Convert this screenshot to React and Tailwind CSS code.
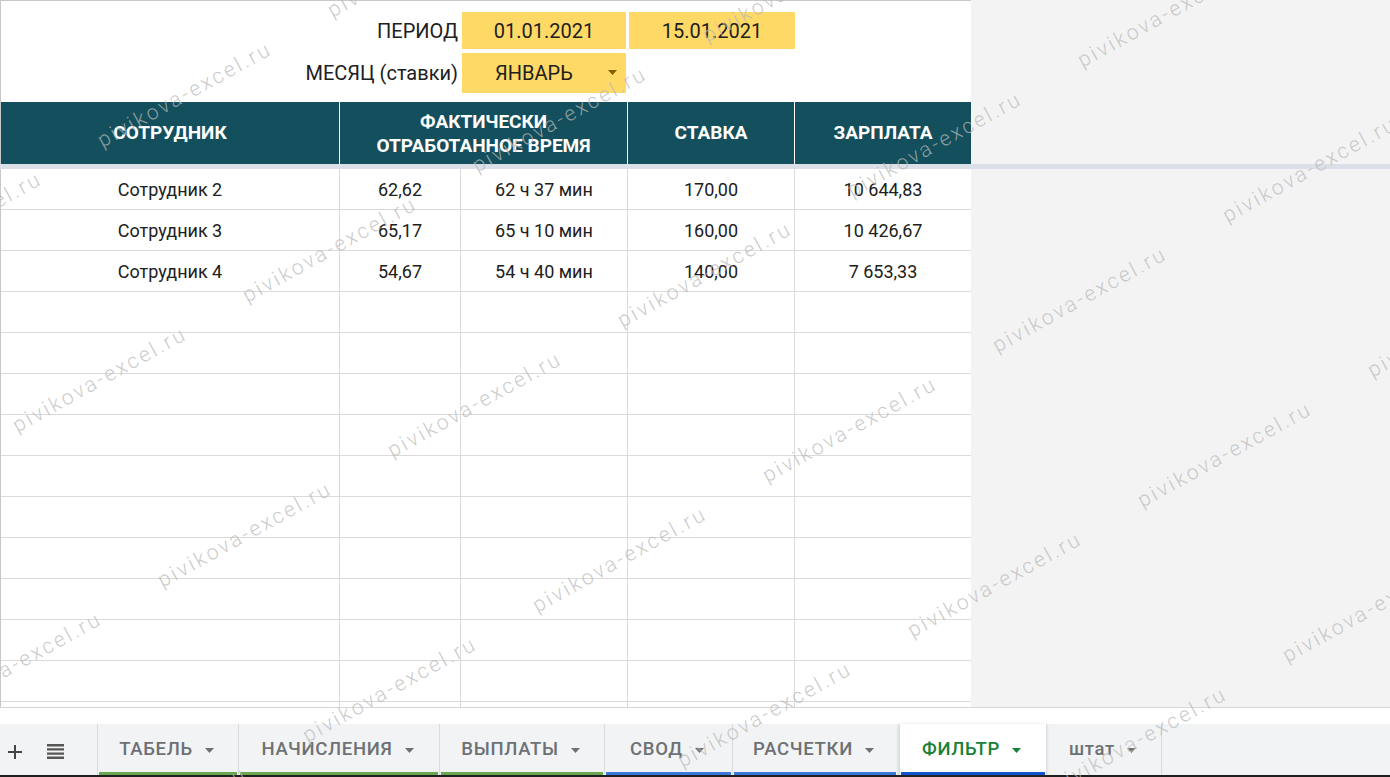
import React from 'react'

const rows = [
  ['Сотрудник 2', '62,62', '62 ч 37 мин', '170,00', '10 644,83'],
  ['Сотрудник 3', '65,17', '65 ч 10 мин', '160,00', '10 426,67'],
  ['Сотрудник 4', '54,67', '54 ч 40 мин', '140,00', '7 653,33'],
]

const tabs = [
  { name: 'ТАБЕЛЬ', w: 'w-[141px]', bar: 'bg-[#6aa84f]' },
  { name: 'НАЧИСЛЕНИЯ', w: 'w-[201px]', bar: 'bg-[#6aa84f]' },
  { name: 'ВЫПЛАТЫ', w: 'w-[165px]', bar: 'bg-[#6aa84f]' },
  { name: 'СВОД', w: 'w-[128px]', bar: 'bg-[#3c78d8]' },
  { name: 'РАСЧЕТКИ', w: 'w-[165px]', bar: 'bg-[#3c78d8]' },
  { name: 'ФИЛЬТР', w: 'w-[147px] ml-[2px]', bar: 'bg-[#1155cc]', active: true },
  { name: 'штат', w: 'w-[115px]', bar: 'bg-transparent' },
]

const cols = 'grid grid-cols-[339px_121px_167px_167px_176px]'

function Caret({ className }) {
  return (
    <svg width="9" height="5" viewBox="0 0 9 5" className={className}>
      <path d="M0 0h9L4.5 5z" fill="currentColor" />
    </svg>
  )
}

// watermark lattice, measured off the screenshot
function watermarks() {
  const out = []
  for (let i = -3; i <= 5; i++) {
    for (let j = -2; j <= 6; j++) {
      const x = 185 + i * 375 + j * 145
      const y = 95 + i * 25 + j * 155
      if (x > -160 && x < 1560 && y > -70 && y < 860) out.push([x, y])
    }
  }
  return out
}

export default function App() {
  return (
    <div className="relative flex h-[777px] w-[1390px] flex-col overflow-hidden bg-white font-['Roboto','Liberation_Sans',sans-serif] text-[#202020]">
      {/* sheet viewport */}
      <div className="flex h-[708px] flex-col border-b border-[#d6d6d6]">
        <div className="flex h-[164px]">
          <div className="w-[971px] border-l border-t border-[#c8c8c8]">
            <div className="flex h-[101px] flex-col pt-[11px] text-[20px]">
              <div className="flex h-[37px] items-center">
                <div className="w-[457px] text-right">ПЕРИОД</div>
                <div className="ml-[4px] flex h-full w-[164px] items-center justify-center bg-[#ffd966]">01.01.2021</div>
                <div className="ml-[3px] flex h-full w-[166px] items-center justify-center bg-[#ffd966]">15.01.2021</div>
              </div>
              <div className="mt-[4px] flex h-[40px] items-center">
                <div className="w-[457px] text-right">МЕСЯЦ (ставки)</div>
                <div className="ml-[4px] flex h-full w-[164px] items-center bg-[#ffd966] pl-[33px] pr-[9px]">
                  <span className="flex-1">ЯНВАРЬ</span>
                  <Caret className="mt-[-1px] text-[#7f6000]" />
                </div>
              </div>
            </div>
            <div className={`${cols} h-[62px] bg-[#134f5c] text-[19px] font-bold text-white`}>
              <div className="flex items-center justify-center border-r border-white">СОТРУДНИК</div>
              <div className="col-span-2 flex flex-col items-center justify-center border-r border-white pt-px leading-[24px]">
                <span>ФАКТИЧЕСКИ</span>
                <span>ОТРАБОТАННОЕ ВРЕМЯ</span>
              </div>
              <div className="flex items-center justify-center border-r border-white">СТАВКА</div>
              <div className="flex items-center justify-center">ЗАРПЛАТА</div>
            </div>
          </div>
          <div className="flex-1 bg-[#f3f3f3]" />
        </div>
        <div className="h-[5px] bg-[#dadfe8]" />
        <div className="flex flex-1 overflow-hidden">
          <div className="w-[971px] border-l border-[#c8c8c8] text-[18px]">
            {Array.from({ length: 14 }).map((_, r) => {
              const row = rows[r] || ['', '', '', '', '']
              return (
                <div key={r} className={`${cols} h-[41px] border-b border-[#dadada]`}>
                  {row.map((v, c) => (
                    <div
                      key={c}
                      className={`flex items-center justify-center pt-px ${c < 4 ? 'border-r border-[#dadada]' : ''}`}
                    >
                      {v}
                    </div>
                  ))}
                </div>
              )
            })}
          </div>
          <div className="flex-1 bg-[#f3f3f3]" />
        </div>
      </div>

      <div className="h-[16px]" />

      {/* sheet tabs */}
      <div className="flex h-[53px] border-b-2 border-[#1f1f1f] bg-[#f1f3f4] text-[#6d7175]">
        <div className="flex w-[97px] items-center pt-[4px]">
          <svg width="14" height="14" viewBox="0 0 14 14" className="ml-[8px] text-[#444]">
            <path d="M6 0h2v6h6v2H8v6H6V8H0V6h6z" fill="currentColor" />
          </svg>
          <svg width="17" height="15" viewBox="0 0 17 15" className="ml-[25px] text-[#555]">
            <path d="M0 0h17v2.4H0zM0 4.2h17v2.4H0zM0 8.4h17v2.4H0zM0 12.6h17V15H0z" fill="currentColor" />
          </svg>
        </div>
        {tabs.map((t) => (
          <div
            key={t.name}
            className={`flex ${t.w} flex-col border-l border-[#dadce0] ${t.active ? 'bg-white text-[#188038] shadow-[0_1px_3px_rgba(60,64,67,0.3)]' : ''}`}
          >
            <div className="flex flex-1 items-center justify-center gap-[12px] pr-[3px] pt-[4px] text-[18.5px] font-medium tracking-[0.7px]">
              <span>{t.name}</span>
              <Caret />
            </div>
            <div className={`mx-px h-[3px] ${t.bar}`} />
          </div>
        ))}
        <div className="flex-1 border-l border-[#dadce0]" />
      </div>

      {/* watermark overlay */}
      <div className="pointer-events-none absolute inset-0">
        {watermarks().map(([x, y]) => (
          <span
            key={`${x}-${y}`}
            className="absolute -translate-x-1/2 -translate-y-1/2 -rotate-[29deg] whitespace-nowrap text-[21px] font-light tracking-[2.6px] text-[rgba(185,185,185,0.75)]"
            style={{ left: x, top: y }}
          >
            pivikova-excel.ru
          </span>
        ))}
      </div>
    </div>
  )
}
